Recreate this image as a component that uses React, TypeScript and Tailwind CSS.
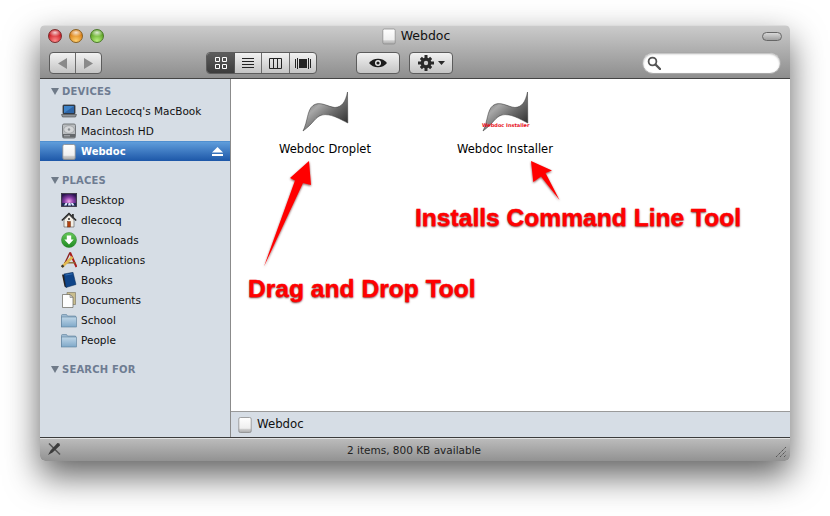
import React from "react";

const font = { fontFamily: '"DejaVu Sans", sans-serif' };

function Volume({ className = "w-4 h-4" }: { className?: string }) {
  return (
    <svg viewBox="0 0 16 16" className={className}>
      <defs>
        <linearGradient id="vol" x1="0" y1="0" x2="0" y2="1">
          <stop offset="0" stopColor="#ffffff" />
          <stop offset="0.72" stopColor="#efefef" />
          <stop offset="0.78" stopColor="#cfcfcf" />
          <stop offset="1" stopColor="#a9a9a9" />
        </linearGradient>
      </defs>
      <rect x="1.800" y="0.500" width="12.400" height="15" rx="1.500" fill="url(#vol)" stroke="#8d8d8d" strokeWidth="0.800" />
    </svg>
  );
}

function Laptop() {
  return (
    <svg viewBox="0 0 16 16" className="w-4 h-4">
      <rect x="2" y="2" width="12" height="9" rx="0.800" fill="#2c3e55" stroke="#333" strokeWidth="0.800" />
      <rect x="3" y="3" width="10" height="7" fill="#3f83c8" />
      <path d="M3 10 L13 3 V10Z" fill="#2e65a6" />
      <path d="M0.500 11.500h15l-1 2.500h-13z" fill="#8f949a" stroke="#444" strokeWidth="0.600" />
    </svg>
  );
}

function HardDrive() {
  return (
    <svg viewBox="0 0 16 16" className="w-4 h-4">
      <rect x="1.500" y="1" width="13" height="14" rx="1.500" fill="#b9bcbf" stroke="#5e6266" strokeWidth="0.800" />
      <ellipse cx="8" cy="6.500" rx="5.200" ry="3.800" fill="#d4d6d8" stroke="#85898d" strokeWidth="0.500" />
      <circle cx="8" cy="6.500" r="1.200" fill="#8c9094" />
      <rect x="2" y="11" width="12" height="3.500" fill="#64686c" />
      <path d="M3 12.800h6" stroke="#c9cccf" strokeWidth="0.800" />
    </svg>
  );
}

function Desktop() {
  return (
    <svg viewBox="0 0 16 16" className="w-4 h-4">
      <defs>
        <radialGradient id="dsk" cx="0.500" cy="0.600" r="0.600">
          <stop offset="0" stopColor="#f5a8ee" />
          <stop offset="0.500" stopColor="#8a3fa8" />
          <stop offset="1" stopColor="#2b1450" />
        </radialGradient>
      </defs>
      <rect x="0.400" y="1.500" width="15.200" height="13" fill="url(#dsk)" stroke="#34343c" strokeWidth="0.800" />
      <rect x="1" y="11" width="14" height="3" fill="#1d2a55" />
      <path d="M3 13.500l1.500-2.500h2l-1 2.500zM7 13.500l.5-2.500h2l.5 2.500zM11 13.500l-1-2.500h2l1.500 2.500z" fill="#dfe8ff" />
    </svg>
  );
}

function Home() {
  return (
    <svg viewBox="0 0 16 16" className="w-4 h-4">
      <path d="M3 8v7h10V8L8 3z" fill="#f3efe6" stroke="#555" strokeWidth="0.600" />
      <path d="M0.800 8.600 8 1.500l7.200 7.100" fill="none" stroke="#222" strokeWidth="1.400" />
      <rect x="11" y="2" width="1.800" height="3.500" fill="#333" />
      <circle cx="8" cy="7" r="1" fill="#333" />
      <rect x="6.500" y="9.500" width="3" height="5.500" fill="#b2410f" stroke="#5a2208" strokeWidth="0.400" />
    </svg>
  );
}

function Downloads() {
  return (
    <svg viewBox="0 0 16 16" className="w-4 h-4">
      <defs>
        <linearGradient id="dl" x1="0" y1="0" x2="0" y2="1">
          <stop offset="0" stopColor="#66c95a" />
          <stop offset="1" stopColor="#1f8a22" />
        </linearGradient>
      </defs>
      <circle cx="8" cy="8" r="7.500" fill="url(#dl)" stroke="#2c7d2c" strokeWidth="0.500" />
      <path d="M5.800 3.500h4.400v4h2.500L8 12.600 3.300 7.500h2.500z" fill="#fff" />
    </svg>
  );
}

function Apps() {
  return (
    <svg viewBox="0 0 16 16" className="w-4 h-4">
      <path d="M9 0.500 15.500 15" stroke="#a81c1c" strokeWidth="2" fill="none" />
      <path d="M9 0.500 3.500 12" stroke="#8a2020" strokeWidth="1.400" fill="none" />
      <path d="M3 10.800h11.500" stroke="#8a6a34" strokeWidth="1.400" />
      <path d="M0.800 15 11.500 5" stroke="#e0b850" strokeWidth="2.600" fill="none" />
      <path d="M0.800 15 2.500 13.400" stroke="#333" strokeWidth="2.400" fill="none" />
    </svg>
  );
}

function Book() {
  return (
    <svg viewBox="0 0 16 16" className="w-4 h-4">
      <path d="M1 2.500 3.500 14.500l2 1.200L4 3z" fill="#2b2018" />
      <path d="M2.800 2 12 .3l3 12.200-10 3z" fill="#0f4488" stroke="#0a2c58" strokeWidth="0.500" />
      <path d="M4.500 3 11.500 1.800" stroke="#3d78bd" strokeWidth="0.800" />
    </svg>
  );
}

function Documents() {
  return (
    <svg viewBox="0 0 16 16" className="w-4 h-4">
      <path d="M6 0.500h8.500v12H6z" fill="#c9bd8e" stroke="#77705a" strokeWidth="0.600" />
      <path d="M1.500 2.500H9l3 3v10H1.500z" fill="#fdfdfd" stroke="#66645c" strokeWidth="0.700" />
      <path d="M9 2.500v3h3z" fill="#d7d7d7" stroke="#66645c" strokeWidth="0.500" />
    </svg>
  );
}

function Folder() {
  return (
    <svg viewBox="0 0 16 16" className="w-4 h-4">
      <defs>
        <linearGradient id="fld" x1="0" y1="0" x2="0" y2="1">
          <stop offset="0" stopColor="#bfd6e8" />
          <stop offset="1" stopColor="#7fa8c8" />
        </linearGradient>
      </defs>
      <path d="M0.500 3.500q0-1 1-1h4l1 1.500h8v10.500H.5z" fill="#9dbad2" stroke="#5d7f9c" strokeWidth="0.600" />
      <rect x="0.500" y="5" width="15" height="10" fill="url(#fld)" stroke="#5d7f9c" strokeWidth="0.600" />
    </svg>
  );
}

function Eject() {
  return (
    <svg viewBox="0 0 11 9" className="w-[11px] h-[9px]">
      <path d="M5.500 0 11 5.500H0z" fill="#fff" />
      <rect y="7" width="11" height="2" fill="#fff" />
    </svg>
  );
}

function Triangle() {
  return (
    <svg viewBox="0 0 8 7" className="w-2 h-[7px]">
      <path d="M0 0h8L4 7z" fill="#6f7a88" />
    </svg>
  );
}

function Heading({ label }: { label: string }) {
  return (
    <div className="h-5 flex items-center pl-[11px] gap-[3px]">
      <Triangle />
      <span className="text-[10px] font-bold text-[#6e7c92] tracking-[0.2px]">{label}</span>
    </div>
  );
}

function Row({ icon, label, selected }: { icon: React.ReactNode; label: string; selected?: boolean }) {
  return (
    <div
      className={
        selected
          ? "h-5 flex items-center pl-[21px] gap-1 bg-gradient-to-b from-[#5f9ddb] to-[#1d57a8] border-t border-[#4f8fd0]"
          : "h-5 flex items-center pl-[21px] gap-1"
      }
    >
      {icon}
      <span
        className={
          selected
            ? "text-[10px] font-bold text-white flex-1"
            : "pt-[2px] text-[10.5px] text-[#111] flex-1"
        }
      >
        {label}
      </span>
      {selected && (
        <span className="pr-[7px] flex">
          <Eject />
        </span>
      )}
    </div>
  );
}

function Light({ from, to, ring }: { from: string; to: string; ring: string }) {
  return (
    <span
      className="w-[14px] h-[14px] rounded-full border"
      style={{
        background: `radial-gradient(ellipse 55% 32% at 50% 22%, rgba(255,255,255,0.8), transparent), radial-gradient(circle at 50% 90%, ${to}, ${from} 70%)`,
        borderColor: ring,
      }}
    />
  );
}

const btn =
  "h-[22px] flex items-center justify-center border border-[#5c5c5c] rounded-[4px] bg-gradient-to-b from-[#f2f2f2] to-[#c4c4c4]";

function Droplet({ label }: { label?: boolean }) {
  return (
    <div className="relative w-[50px] h-[44px]">
      <svg viewBox="0 0 50 44" className="w-[50px] h-[44px]">
        <defs>
          <linearGradient id="drp" x1="0" y1="0" x2="1" y2="1">
            <stop offset="0" stopColor="#3a3a3a" />
            <stop offset="0.350" stopColor="#a8a8a8" />
            <stop offset="0.600" stopColor="#6a6a6a" />
            <stop offset="1" stopColor="#1d1d1d" />
          </linearGradient>
        </defs>
        <path
          d="M3 41C8 31 7 20 13 15.500C20 10.500 28 17 35 17.500C42 17 45.500 12 47.500 2L47.800 33C40 29 30 23 22 25C15 27 14 33 3 41Z"
          fill="url(#drp)"
          stroke="#333"
          strokeWidth="0.500"
        />
      </svg>
      {label && (
        <span className="absolute left-[2px] top-[32px] w-[46px] text-center text-[5px] leading-[6px] font-bold text-[#e8101c] whitespace-nowrap">
          Webdoc Installer
        </span>
      )}
    </div>
  );
}

function Item({ name, label }: { name: string; label?: boolean }) {
  return (
    <div className="w-[180px] flex flex-col items-center">
      <Droplet label={label} />
      <div className="mt-[7px] text-[11.500px] leading-4 text-black">{name}</div>
    </div>
  );
}

export default function App() {
  return (
    <div className="relative w-[830px] h-[516px] bg-white overflow-hidden pt-[25px] pl-[40px]" style={font}>
      <div className="w-[750px] h-[436px] flex flex-col rounded-[5px] overflow-hidden shadow-[0_15px_34px_rgba(0,0,0,0.62)]">
        {/* Toolbar */}
        <div className="h-[54px] shrink-0 flex flex-col bg-gradient-to-b from-[#cbcbcb] to-[#8e8e8e] border-t border-[#dcdcdc] border-b border-b-[#444]">
          <div className="h-[26px] flex items-center pl-[8px] pr-[8px] pb-[6px]">
            <div className="flex gap-[7px]">
              <Light from="#c8141c" to="#ff8a8a" ring="#7a2a2a" />
              <Light from="#d87a10" to="#ffd070" ring="#8a6020" />
              <Light from="#5aa020" to="#b8f080" ring="#4a7a28" />
            </div>
            <div className="flex-1 flex items-center justify-center gap-1 pr-[35px]">
              <Volume className="w-4 h-[17px]" />
              <span className="text-[12.500px] text-[#111]">Webdoc</span>
            </div>
            <span className="w-[20px] h-[9px] rounded-full border border-[#666] bg-gradient-to-b from-[#d8d8d8] to-[#a0a0a0]" />
          </div>
          <div className="flex items-center pl-[9px] pr-[9px]">
            <div className={btn + " w-[53px]"}>
              <span className="flex-1 h-full flex items-center justify-center border-r border-[#6c6c6c]">
                <svg viewBox="0 0 9 11" className="w-[9px] h-[11px]">
                  <path d="M9 0v11L0 5.500z" fill="#8a8a8a" />
                </svg>
              </span>
              <span className="flex-1 h-full flex items-center justify-center">
                <svg viewBox="0 0 9 11" className="w-[9px] h-[11px]">
                  <path d="M0 0v11l9-5.500z" fill="#8a8a8a" />
                </svg>
              </span>
            </div>
            <div className={btn + " w-[111px] ml-[104px] overflow-hidden"}>
              <span className="w-[28px] h-full flex items-center justify-center bg-gradient-to-b from-[#5e5e5e] to-[#3c3c3c] border-r border-[#555]">
                <svg viewBox="0 0 12 12" className="w-3 h-3">
                  <path d="M.5.5h4v4h-4zM7.5.5h4v4h-4zM.5 7.5h4v4h-4zM7.5 7.5h4v4h-4z" fill="none" stroke="#fff" />
                </svg>
              </span>
              <span className="flex-1 h-full flex items-center justify-center border-r border-[#6c6c6c]">
                <svg viewBox="0 0 12 11" className="w-3 h-[11px]">
                  <path d="M0 .5h12M0 3.500h12M0 6.500h12M0 9.500h12" stroke="#222" />
                </svg>
              </span>
              <span className="flex-1 h-full flex items-center justify-center border-r border-[#6c6c6c]">
                <svg viewBox="0 0 13 11" className="w-[13px] h-[11px]">
                  <path d="M.5.5h12v10H.5zM4.500.5v10M8.500.5v10" fill="none" stroke="#222" />
                </svg>
              </span>
              <span className="flex-1 h-full flex items-center justify-center">
                <svg viewBox="0 0 16 11" className="w-4 h-[11px]">
                  <path d="M.5 1v9M2.500 0v11M13.500 0v11M15.500 1v9" stroke="#222" />
                  <rect x="4" y="1" width="8" height="9" fill="#222" />
                </svg>
              </span>
            </div>
            <div className={btn + " w-[44px] ml-[39px]"}>
              <svg viewBox="0 0 18 10" className="w-[18px] h-[10px]">
                <path d="M0 5C4-.7 14-.7 18 5C14 10.700 4 10.700 0 5Z" fill="#1c1c1c" />
                <circle cx="9" cy="5" r="3" fill="#e8e8e8" />
                <circle cx="9" cy="5" r="1.600" fill="#1c1c1c" />
              </svg>
            </div>
            <div className={btn + " w-[44px] ml-[9px] gap-[4px]"}>
              <svg viewBox="0 0 16 16" className="w-4 h-4">
                <g fill="#2a2a2a">
                  <circle cx="8" cy="8" r="5.400" />
                  <path d="M6.500 0h3v16h-3zM0 6.500h16v3H0z" />
                  <path d="M1.800 3.900 3.900 1.800 14.200 12.100 12.100 14.200zM12.100 1.800 14.200 3.900 3.900 14.200 1.800 12.100z" />
                </g>
                <circle cx="8" cy="8" r="2.200" fill="#cfcfcf" />
              </svg>
              <svg viewBox="0 0 7 4" className="w-[7px] h-1">
                <path d="M0 0h7L3.500 4z" fill="#2a2a2a" />
              </svg>
            </div>
            <div className="ml-auto w-[139px] h-[22px] rounded-full bg-white border border-[#a8a8a8] shadow-[inset_0_1px_2px_rgba(0,0,0,0.3)] flex items-center pl-[4px]">
              <svg viewBox="0 0 14 14" className="w-[14px] h-[14px]">
                <circle cx="5.500" cy="5.500" r="3.900" fill="none" stroke="#555" strokeWidth="1.800" />
                <path d="M8.500 8.500 13 13" stroke="#555" strokeWidth="2.400" strokeLinecap="round" />
              </svg>
            </div>
          </div>
        </div>

        {/* Body */}
        <div className="flex-1 flex min-h-0">
          <div className="w-[191px] shrink-0 bg-[#d6dde5] border-r border-[#8b8b8b] pt-[2px] flex flex-col">
            <Heading label="DEVICES" />
            <Row icon={<Laptop />} label="Dan Lecocq's MacBook" />
            <Row icon={<HardDrive />} label="Macintosh HD" />
            <Row icon={<Volume />} label="Webdoc" selected />
            <div className="h-[9px]" />
            <Heading label="PLACES" />
            <Row icon={<Desktop />} label="Desktop" />
            <Row icon={<Home />} label="dlecocq" />
            <Row icon={<Downloads />} label="Downloads" />
            <Row icon={<Apps />} label="Applications" />
            <Row icon={<Book />} label="Books" />
            <Row icon={<Documents />} label="Documents" />
            <Row icon={<Folder />} label="School" />
            <Row icon={<Folder />} label="People" />
            <div className="h-[9px]" />
            <Heading label="SEARCH FOR" />
          </div>
          <div className="flex-1 flex flex-col min-w-0">
            <div className="flex-1 bg-white flex pl-[4px] pt-[11px]">
              <Item name="Webdoc Droplet" />
              <Item name="Webdoc Installer" label />
            </div>
            <div className="h-[26px] shrink-0 bg-[#d6dde5] border-t border-[#9a9a9a] flex items-center pl-[6px] gap-1">
              <Volume />
              <span className="text-[11.750px] text-[#111]">Webdoc</span>
            </div>
          </div>
        </div>

        {/* Status bar */}
        <div className="h-6 shrink-0 relative flex items-center justify-center bg-gradient-to-b from-[#bdbdbd] to-[#929292] border-t border-[#3c3c3c] shadow-[inset_0_1px_0_#e2e2e2]">
          <span className="pt-[2px] text-[10.500px] text-[#222] pr-[2px]">2 items, 800 KB available</span>
          <svg viewBox="0 0 14 14" className="absolute left-[7px] top-[4px] w-[14px] h-[14px]">
            <path d="M2 1.500 13 12.500" stroke="#555" strokeWidth="1.600" />
            <path d="M12.500 1.500 10.500 1 3.500 8.500 1 13l4.500-2.500 7.500-7z" fill="#3c3c3c" />
          </svg>
          <svg viewBox="0 0 12 12" className="absolute right-[3px] bottom-[3px] w-3 h-3">
            <path d="M1 11 11 1M5 11l6-6M9 11l2-2" stroke="#555" strokeWidth="1" strokeDasharray="1.500 0.600" />
          </svg>
        </div>
      </div>

      {/* Annotations over the window */}
      <svg viewBox="0 0 830 516" className="absolute left-0 top-0 w-[830px] h-[516px] pointer-events-none">
        <defs>
          <filter id="sh" x="-20%" y="-20%" width="140%" height="140%">
            <feDropShadow dx="0" dy="1" stdDeviation="1.200" floodColor="#500000" floodOpacity="0.7" />
          </filter>
        </defs>
        <g filter="url(#sh)" fill="#ff0000">
          <path d="M309 161 290 178 295 180.500 264 266.500 303 183 311 185Z" />
          <path d="M531 161 533.300 182 541 176.500 559.500 200 545.500 173 552 170.500Z" />
        </g>
      </svg>
      <span
        className="absolute left-[415px] top-[203px] text-[24.600px] leading-[30px] font-bold text-[#ff0000] whitespace-nowrap [text-shadow:0_1px_2px_rgba(80,0,0,0.8)] [-webkit-text-stroke:0.4px_#ff0000]"
        style={{ fontFamily: '"Liberation Sans", sans-serif' }}
      >
        Installs Command Line Tool
      </span>
      <span
        className="absolute left-[248px] top-[274px] text-[24.600px] leading-[30px] font-bold text-[#ff0000] whitespace-nowrap [text-shadow:0_1px_2px_rgba(80,0,0,0.8)] [-webkit-text-stroke:0.4px_#ff0000]"
        style={{ fontFamily: '"Liberation Sans", sans-serif' }}
      >
        Drag and Drop Tool
      </span>
    </div>
  );
}
